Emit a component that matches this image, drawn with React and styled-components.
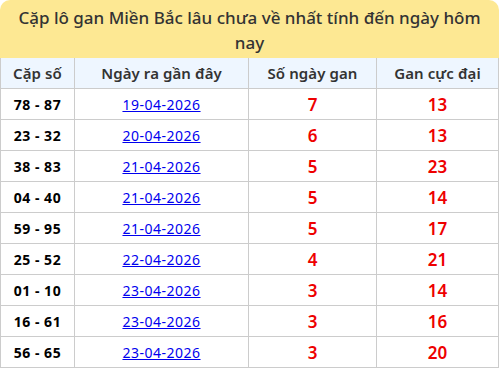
import styled, { createGlobalStyle } from 'styled-components';

const GlobalStyle = createGlobalStyle`
    html, body {
        margin: 0;
        padding: 0;
        background: #ffffff;
    }
    body {
        font-family: "Noto Sans", "Open Sans", sans-serif;
    }
`;

const rows = [
    { pair: '78 - 87', date: '19-04-2026', days: 7, max: 13 },
    { pair: '23 - 32', date: '20-04-2026', days: 6, max: 13 },
    { pair: '38 - 83', date: '21-04-2026', days: 5, max: 23 },
    { pair: '04 - 40', date: '21-04-2026', days: 5, max: 14 },
    { pair: '59 - 95', date: '21-04-2026', days: 5, max: 17 },
    { pair: '25 - 52', date: '22-04-2026', days: 4, max: 21 },
    { pair: '01 - 10', date: '23-04-2026', days: 3, max: 14 },
    { pair: '16 - 61', date: '23-04-2026', days: 3, max: 16 },
    { pair: '56 - 65', date: '23-04-2026', days: 3, max: 20 },
];

export default function App() {
    return (
        <>
            <GlobalStyle />
            <Wrapper>
                <Caption>Cặp lô gan Miền Bắc lâu chưa về nhất tính đến ngày hôm nay</Caption>
                <Table>
                    <colgroup>
                        <col style={{ width: 74 }} />
                        <col style={{ width: 174 }} />
                        <col style={{ width: 128 }} />
                        <col />
                    </colgroup>
                    <thead>
                        <tr>
                            <HeadCell>Cặp số</HeadCell>
                            <HeadCell>Ngày ra gần đây</HeadCell>
                            <HeadCell>Số ngày gan</HeadCell>
                            <HeadCell>Gan cực đại</HeadCell>
                        </tr>
                    </thead>
                    <tbody>
                        {rows.map((r) => (
                            <tr key={r.pair}>
                                <PairCell>{r.pair}</PairCell>
                                <Cell>
                                    <DateLink href="#">{r.date}</DateLink>
                                </Cell>
                                <NumberCell>{r.days}</NumberCell>
                                <NumberCell>{r.max}</NumberCell>
                            </tr>
                        ))}
                    </tbody>
                </Table>
            </Wrapper>
        </>
    );
}

const Wrapper = styled.div`
    width: 499px;
`;

const Caption = styled.div`
    height: 58px;
    box-sizing: border-box;
    padding: 5px 18px 0px 18px;

    background-color: #fde893;
    border-radius: 10px 10px 0px 0px;

    font-size: 17px;
    font-weight: 500;
    line-height: 25px;
    color: #333333;
    text-align: center;
`;

const Table = styled.table`
    width: 100%;
    border-collapse: collapse;
    table-layout: fixed;
`;

const Cell = styled.td`
    height: 30px;
    padding: 0px;
    border: 1px solid #cccccc;
    text-align: center;
    vertical-align: middle;
`;

const HeadCell = styled.th`
    height: 30px;
    padding: 0px;
    border: 1px solid #cccccc;
    border-top: none;
    background-color: #eef6ff;

    font-size: 15px;
    font-weight: 600;
    letter-spacing: 0.1px;
    color: #333333;
    text-align: center;
`;

const PairCell = styled(Cell)`
    font-size: 14px;
    font-weight: 700;
    letter-spacing: 0.5px;
    color: #000000;
`;

const NumberCell = styled(Cell)`
    font-size: 17px;
    font-weight: 600;
    color: #ee0000;
`;

const DateLink = styled.a`
    font-size: 14px;
    letter-spacing: 0.5px;
    color: #0000ee;
    text-decoration: underline;
`;
